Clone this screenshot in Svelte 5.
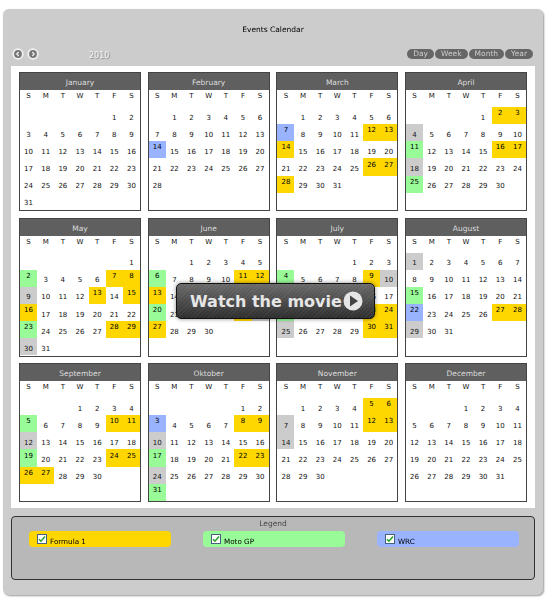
<script>
    const Y = "yellow", G = "green", B = "blue", O = "off";

    const months = [
        { name: "January", ev: {} },
        { name: "February", ev: { 14: B } },
        { name: "March", ev: { 7: B, 12: Y, 13: Y, 14: Y, 26: Y, 27: Y, 28: Y } },
        { name: "April", ev: { 2: Y, 3: Y, 4: O, 11: G, 16: Y, 17: Y, 18: O, 25: G } },
        { name: "May", ev: { 2: G, 7: Y, 8: Y, 9: O, 13: Y, 15: Y, 16: Y, 23: G, 28: Y, 29: Y, 30: O } },
        { name: "June", ev: { 6: G, 11: Y, 12: Y, 13: Y, 20: G, 25: Y, 26: O, 27: Y } },
        { name: "July", ev: { 4: G, 9: Y, 10: O, 18: G, 23: Y, 24: Y, 25: O, 30: Y, 31: Y } },
        { name: "August", ev: { 1: O, 15: G, 22: B, 27: Y, 28: Y, 29: O } },
        { name: "September", ev: { 5: G, 10: Y, 11: Y, 12: O, 19: G, 24: Y, 25: Y, 26: Y, 27: Y } },
        { name: "Oktober", ev: { 3: B, 8: Y, 9: Y, 10: O, 17: G, 22: Y, 23: Y, 24: O, 31: G } },
        { name: "November", ev: { 5: Y, 6: Y, 7: O, 12: Y, 13: Y, 14: O } },
        { name: "December", ev: {} }
    ];

    const weekdays = ["S", "M", "T", "W", "T", "F", "S"];
    const views = ["Day", "Week", "Month", "Year"];
    const legend = [
        { label: "Formula 1", cls: "yellow" },
        { label: "Moto GP", cls: "green" },
        { label: "WRC", cls: "blue" }
    ];

    // 42 slots per month, empty ones are null
    const cellsFor = (index) => {
        const offset = new Date(2010, index, 1).getDay();
        const count = new Date(2010, index + 1, 0).getDate();
        const cells = [];
        for (let i = 0; i < 42; i++) {
            const day = i - offset + 1;
            cells.push(day >= 1 && day <= count ? day : null);
        }
        return cells;
    };
</script>

<div class="page">
    <div class="panel">
        <div class="top">
            <h1>Events Calendar</h1>
            <div class="toolbar">
                <div class="nav">
                    <svg width="12" height="12" viewBox="0 0 12 12">
                        <circle cx="6" cy="6" r="5.7" fill="#f0f0f0" />
                        <circle cx="6" cy="6" r="3.9" fill="#777" />
                        <path d="M6.7 4 4.8 6 6.7 8" fill="none" stroke="#eee" stroke-width="1.3" />
                    </svg>
                    <svg width="12" height="12" viewBox="0 0 12 12">
                        <circle cx="6" cy="6" r="5.7" fill="#f0f0f0" />
                        <circle cx="6" cy="6" r="3.9" fill="#777" />
                        <path d="M5.3 4 7.2 6 5.3 8" fill="none" stroke="#eee" stroke-width="1.3" />
                    </svg>
                    <span class="year">2010</span>
                </div>
                <div class="views">
                    {#each views as view}
                        <span class="view">{view}</span>
                    {/each}
                </div>
            </div>
        </div>

        <div class="sheet">
            <div class="grid">
                {#each months as month, index}
                    <div class="month">
                        <div class="month-name">{month.name}</div>
                        <div class="weekdays">
                            {#each weekdays as wd}
                                <span>{wd}</span>
                            {/each}
                        </div>
                        <div class="days">
                            {#each cellsFor(index) as day}
                                <span class="day {day ? month.ev[day] || '' : ''}">{day ?? ""}</span>
                            {/each}
                        </div>
                    </div>
                {/each}
            </div>
            <div class="movie">
                <span>Watch the movie</span>
                <svg width="20" height="20" viewBox="0 0 20 20">
                    <circle cx="10" cy="10" r="9.5" fill="#e6e6e6" />
                    <path d="M7 4.5 15 10 7 15.5Z" fill="#444" />
                </svg>
            </div>
        </div>

        <div class="legend">
            <div class="legend-title">Legend</div>
            <div class="legend-items">
                {#each legend as item}
                    <div class="legend-item {item.cls}">
                        <span class="check">
                            <svg width="8" height="8" viewBox="0 0 8 8">
                                <path d="M1 4.2 3 6.2 7 1.6" fill="none" stroke="#2aa52a" stroke-width="1.6" />
                            </svg>
                        </span>
                        <span class="label">{item.label}</span>
                    </div>
                {/each}
            </div>
        </div>
    </div>
</div>

<style>
    :global(body) {
        background: #fff;
    }

    .page {
        width: 550px;
        height: 602px;
        padding: 9px 0 0 3px;
        box-sizing: border-box;
        font-family: "DejaVu Sans", Verdana, sans-serif;
        font-size: 7px;
        color: #111;
        filter: blur(0.35px);
    }

    .panel {
        width: 540px;
        height: 586px;
        box-sizing: border-box;
        padding: 0 8px;
        background: #ccc;
        border-radius: 6px;
        box-shadow: 1px 1px 2px #999;
    }

    .top {
        height: 57px;
        box-sizing: border-box;
        padding-top: 16px;
    }

    h1 {
        margin: 0;
        font-size: 7.5px;
        line-height: 9px;
        font-weight: normal;
        color: #000;
        text-align: center;
    }

    .toolbar {
        display: flex;
        justify-content: space-between;
        align-items: center;
        margin-top: 14px;
        height: 12px;
        padding-right: 2px;
    }

    .nav {
        display: flex;
        align-items: center;
        gap: 3px;
        margin-left: 1px;
    }

    .year {
        margin-left: 47px;
        margin-top: 2px;
        font-size: 8px;
        color: #f2f2f2;
        text-shadow: 1px 1px 1px #888;
    }

    .views {
        display: flex;
        gap: 1px;
    }

    .view {
        height: 10px;
        line-height: 10px;
        padding: 0 6px;
        border-radius: 5px;
        background: #666;
        color: #ccc;
        font-size: 7.5px;
    }

    .sheet {
        position: relative;
        width: 524px;
        height: 442px;
        box-sizing: border-box;
        padding: 6px 0 0 8px;
        background: #fff;
    }

    .grid {
        display: grid;
        grid-template-columns: repeat(4, 122px);
        grid-auto-rows: 139px;
        column-gap: 6.67px;
        row-gap: 6.5px;
    }

    .month {
        border: 1px solid #444;
        background: #fff;
    }

    .month-name {
        height: 17px;
        line-height: 20px;
        background: #5f5f5f;
        color: #ddd;
        text-align: center;
        font-size: 7.5px;
    }

    .weekdays {
        display: grid;
        grid-template-columns: repeat(7, 1fr);
        height: 17px;
        box-sizing: border-box;
        line-height: 10px;
        padding-top: 1px;
        text-align: center;
    }

    .days {
        display: grid;
        grid-template-columns: repeat(7, 1fr);
        grid-auto-rows: 17.17px;
    }

    .day {
        display: flex;
        align-items: center;
        justify-content: center;
        padding-top: 4px;
        box-sizing: border-box;
    }

    .day.yellow,
    .day.green,
    .day.blue {
        padding: 0 0 5px;
        color: #000;
    }

    .yellow {
        background: #ffd700;
    }

    .green {
        background: #98fb98;
    }

    .blue {
        background: #99b3ff;
    }

    .off {
        background: #ccc;
    }

    .movie {
        position: absolute;
        left: 165px;
        top: 217px;
        width: 199px;
        height: 36px;
        box-sizing: border-box;
        display: flex;
        align-items: center;
        gap: 1px;
        padding-left: 13px;
        border: 1px solid #111;
        border-radius: 5px;
        background:
            repeating-linear-gradient(135deg, rgba(255, 255, 255, 0.05) 0 1px, transparent 1px 3px),
            linear-gradient(#6a6a6a, #2e2e2e);
        box-shadow: 0 0 4px rgba(0, 0, 0, 0.45);
        color: #e6e6e6;
        font-size: 16px;
        font-weight: bold;
        white-space: nowrap;
    }

    .legend {
        height: 64px;
        margin-top: 8px;
        box-sizing: border-box;
        border: 1px solid #333;
        border-radius: 4px;
        background: #b8b8b8;
    }

    .legend-title {
        height: 14px;
        line-height: 13px;
        text-align: center;
        color: #444;
        font-size: 7.5px;
    }

    .legend-items {
        display: flex;
        gap: 32px;
        padding-left: 17px;
    }

    .legend-item {
        display: flex;
        width: 142px;
        height: 16px;
        box-sizing: border-box;
        padding: 3px 0 0 8px;
        border-radius: 4px;
    }

    .check {
        display: flex;
        align-items: center;
        justify-content: center;
        width: 10px;
        height: 10px;
        box-sizing: border-box;
        border: 1px solid #46607e;
        background: #fff;
    }

    .label {
        margin: 3px 0 0 3px;
        line-height: 9px;
        font-size: 7.2px;
        color: #000;
    }
</style>
